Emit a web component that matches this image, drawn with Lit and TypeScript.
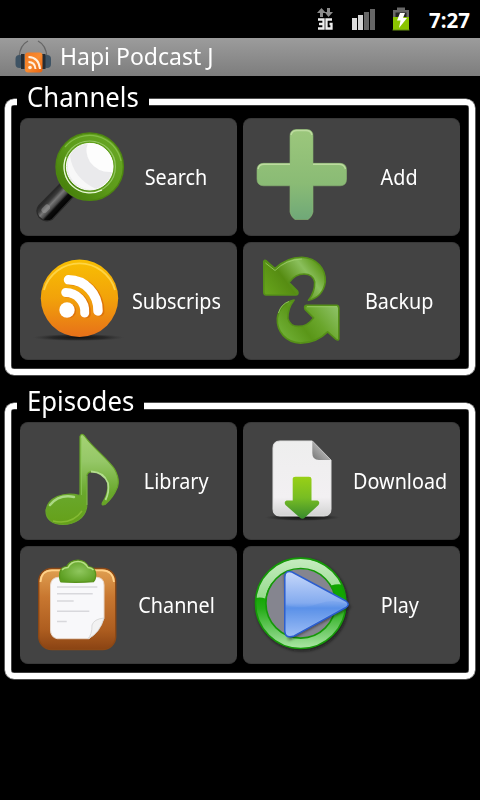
import { LitElement, html, css, svg } from "lit";
import { customElement, property } from "lit/decorators.js";

const icons: Record<string, unknown> = {
  search: svg`
    <defs>
      <linearGradient id="sg" x1="0" y1="1" x2="1" y2="0"><stop offset="0" stop-color="#3f7606"/><stop offset=".5" stop-color="#5d9c1a"/><stop offset="1" stop-color="#6aa826"/></linearGradient>
      <linearGradient id="sh" gradientUnits="userSpaceOnUse" x1="16" y1="66" x2="32" y2="81"><stop offset="0" stop-color="#151515"/><stop offset=".3" stop-color="#3c3c3c"/><stop offset=".45" stop-color="#777"/><stop offset=".62" stop-color="#4a4a4a"/><stop offset=".72" stop-color="#0c0c0c"/><stop offset="1" stop-color="#000"/></linearGradient>
    </defs>
    <path d="M30 55 L8.5 77 Q5 82 9 88 Q15 94 22 90.5 L43 68 Z" fill="url(#sh)" stroke="#2a2a2a" stroke-width="1.2"/>
    <path d="M17 78.500 L14.500 81" stroke="#a0a0a0" stroke-width="6" stroke-linecap="round" opacity=".5"/>
    <circle cx="59.7" cy="37.7" r="33.7" fill="url(#sg)" stroke="#4d8610" stroke-width="1.4"/>
    <path d="M35 18 A32 32 0 0 1 91 32" fill="none" stroke="#8bc34f" stroke-width="1.2" opacity=".8"/>
    <circle cx="59.7" cy="37.7" r="25.7" fill="none" stroke="#94c763" stroke-width="1.2"/>
    <path d="M36 28 A26 26 0 0 0 72 61" fill="none" stroke="#e8f8d7" stroke-width="1.2"/>
    <circle cx="59.7" cy="37.7" r="23.3" fill="#eaeaec" stroke="#fff"/>
    <path d="M58 14 A23.5 23.5 0 0 1 82.5 43 Q68 44 60 33 Q54 23 58 14Z" fill="#fdfdfd"/>
    <path d="M40 27 Q43 49 66 60 A23.5 23.5 0 0 1 40 27Z" fill="#f8f8f8"/>`,
  add: svg`
    <defs><linearGradient id="ag" gradientUnits="userSpaceOnUse" x1="0" y1="0" x2="0" y2="91"><stop offset="0" stop-color="#9cc77c"/><stop offset=".6" stop-color="#8abb75"/><stop offset="1" stop-color="#6fa878"/></linearGradient></defs>
    <path d="M43 .5H54Q60 .8 60 7V34.3H87Q93.5 34.5 93.5 41V50Q93.5 56.8 87 56.8H60V83Q59 88 55 90.5H42Q38 88 37 83V56.8H10.500Q4 56.5 4 50V41Q4 34.500 10.500 34.300H37V7Q37 1 43 .5Z" fill="url(#ag)" stroke="#8ab571" stroke-opacity=".6"/>
    <path d="M38 6Q39 1.500 44 1.500H53Q58 1.500 59 6M5 40Q6 35.300 11 35.300H37M60 35.300H86Q91 35.300 92.500 40" fill="none" stroke="#bddb9f" stroke-width="1.4"/>`,
  rss: svg`
    <defs>
      <linearGradient id="rg" x1="0" y1="0" x2="0" y2="1"><stop offset="0" stop-color="#f8bf02"/><stop offset=".5" stop-color="#f2a20a"/><stop offset="1" stop-color="#e77019"/></linearGradient>
      <radialGradient id="rs"><stop offset="0" stop-color="#111"/><stop offset=".6" stop-color="#222" stop-opacity=".8"/><stop offset="1" stop-color="#333" stop-opacity="0"/></radialGradient>
    </defs>
    <ellipse cx="48.500" cy="84.500" rx="46" ry="3.600" fill="url(#rs)"/>
    <circle cx="49.500" cy="45.300" r="38.700" fill="url(#rg)"/>
    <path d="M14 37A37 37 0 0 1 85 37" fill="none" stroke="#ffdb55" stroke-width="1.800" opacity=".8"/>
    <g fill="none" stroke="#d96b08" stroke-linecap="round" opacity=".75" transform="translate(1.700 .8)"><path d="M35.700 39.500A19 19 0 0 1 54.700 60" stroke-width="9"/><path d="M38.500 26.800A29.500 30.500 0 0 1 68 58" stroke-width="9.500"/><circle cx="37" cy="57" r="3.500" stroke-width="8"/></g>
    <g fill="none" stroke="#fff" stroke-linecap="round"><path d="M35.700 39.500A19 19 0 0 1 54.700 60" stroke-width="9"/><path d="M38.500 26.800A29.500 30.500 0 0 1 68 58" stroke-width="9.500"/></g>
    <circle cx="37" cy="57" r="7.700" fill="#fff"/>`,
  backup: svg`
    <defs>
      <linearGradient id="bg1" gradientUnits="userSpaceOnUse" x1="15" y1="42" x2="62" y2="6"><stop offset="0" stop-color="#67a41c"/><stop offset=".38" stop-color="#568c12"/><stop offset=".75" stop-color="#8abf5c"/><stop offset="1" stop-color="#5d9819"/></linearGradient>
      <linearGradient id="bg2" gradientUnits="userSpaceOnUse" x1="15" y1="42" x2="62" y2="6"><stop offset="0" stop-color="#8cc064"/><stop offset=".38" stop-color="#6aa62c"/><stop offset=".65" stop-color="#5a9618"/><stop offset="1" stop-color="#6fae34"/></linearGradient>
    </defs>
    <g stroke="#559018" stroke-width="1.600" stroke-linejoin="round">
      <path d="M10.800 8.500Q11.500 6.500 13.500 8L22 15.500Q33 4.500 49 4.300C64 5 73 16 72.300 29Q70 44 55.500 47.300Q62 39 61.700 29Q60 21 51 21Q42 21 36 29.500L44.500 38Q46 41.500 43 42H13Q10.800 42 10.800 39Z" fill="url(#bg1)"/>
      <path transform="rotate(180 48.300 47.200)" d="M10.800 8.500Q11.500 6.500 13.500 8L22 15.500Q33 4.500 49 4.300C64 5 73 16 72.300 29Q70 44 55.500 47.300Q62 39 61.700 29Q60 21 51 21Q42 21 36 29.500L44.500 38Q46 41.500 43 42H13Q10.800 42 10.800 39Z" fill="url(#bg2)"/>
    </g>
    <path d="M12.500 10L22 17.500Q33 6.500 49 6M25.500 60Q28 51 36 48.500M54 53.700H84" fill="none" stroke="#a5d573" opacity=".7"/>`,
  library: svg`
    <defs>
      <linearGradient id="lg" x1="0" y1="0" x2="0" y2="1"><stop offset="0" stop-color="#a5d375"/><stop offset=".3" stop-color="#95c767"/><stop offset=".65" stop-color="#69a82c"/><stop offset="1" stop-color="#65a019"/></linearGradient>
    </defs>
    <path d="M50 3.500Q51.500 -.5 54.500 3C62 14 78 26 84.500 36Q90 46 87.500 54Q83 65 75 71.500Q71 73 72.500 69.500Q79 59 78 50C74 38 62 38 58.500 39.500Q56.700 41 56.700 44V74C55 85 45 91.500 33 91.500C22 91.500 15.500 86 16 77C18 65 33 58 50 62.500Z" fill="url(#lg)" stroke="#68a42a" stroke-width="1.200"/>
    <path d="M20 72Q29 61 44 64" fill="none" stroke="#abd884" stroke-width="2.500" stroke-linecap="round"/>
    <path d="M61 38.500Q74 39 78 50Q79.500 59 75.500 67" fill="none" stroke="#b3dd8e" stroke-width="1.800"/>
    <path d="M23 88Q42 92 52 78" fill="none" stroke="#92c43c" stroke-width="1.500" opacity=".7"/>
    <path d="M51.500 5V62M57 43V72" stroke="#8fca5c" opacity=".7"/>`,
  download: svg`
    <defs>
      <linearGradient id="dg" x1="0" y1="0" x2="0" y2="1"><stop offset="0" stop-color="#eee"/><stop offset=".75" stop-color="#f2f0f2"/><stop offset="1" stop-color="#d2d2d2"/></linearGradient>
      <linearGradient id="df" x1="0" y1="1" x2="1" y2="0"><stop offset="0" stop-color="#747474"/><stop offset=".5" stop-color="#aaa"/><stop offset="1" stop-color="#777"/></linearGradient>
      <linearGradient id="da" x1="0" y1="0" x2="0" y2="1"><stop offset="0" stop-color="#98d016"/><stop offset=".5" stop-color="#78bd23"/><stop offset="1" stop-color="#388a2d"/></linearGradient>
      <radialGradient id="ds"><stop offset="0" stop-color="#111"/><stop offset=".65" stop-color="#222" stop-opacity=".8"/><stop offset="1" stop-color="#333" stop-opacity="0"/></radialGradient>
    </defs>
    <ellipse cx="49.500" cy="84.500" rx="38" ry="3.500" fill="url(#ds)"/>
    <path d="M27 8H59.300L78 27V76Q78 83 71 83H27Q20 83 20 76V15Q20 8 27 8Z" fill="url(#dg)" stroke="#e0e0e0"/>
    <path d="M59.300 8L78 27H66Q59.300 27 59.300 20Z" fill="url(#df)"/>
    <path d="M42.500 43.700H56Q58.500 43.700 58.500 46V67.500H64.500Q67.500 69 65.500 72L52 84.500Q49.500 87 46.700 84.500L32.500 72Q30.500 69 33.500 67.500H39.700V46Q39.700 43.700 42.500 43.700Z" fill="url(#da)"/>`,
  channel: svg`
    <defs>
      <linearGradient id="cg" x1="0" y1="0" x2="0" y2="1"><stop offset="0" stop-color="#e0a052"/><stop offset=".35" stop-color="#c87730"/><stop offset=".75" stop-color="#ae5e20"/><stop offset="1" stop-color="#8a4313"/></linearGradient>
      <radialGradient id="cc" cx=".55" cy=".5" r=".6"><stop offset="0" stop-color="#8fc75e"/><stop offset="1" stop-color="#5a9c1e"/></radialGradient>
    </defs>
    <rect x="8.700" y="11.500" width="77" height="81" rx="13" fill="url(#cg)" stroke="#8c4815" stroke-width="1.400"/>
    <path d="M10.500 25Q11 13.300 22 13.300H72Q83 13.300 84 25" fill="none" stroke="#ffd189" stroke-width="1.800"/>
    <path d="M28 20.300H67Q74 21 74 28V61Q69 75 59 81.700H27Q20.500 80 20.500 73V28Q21 21 28 20.300Z" fill="#f8f8fa" stroke="#e8d7c9" stroke-width="1"/>
    <path d="M74 61Q64 62 62 68Q62 78 58 81.700Q70 76 74 61Z" fill="#f2f2f2" stroke="#d3d3d3" stroke-width=".8"/>
    <path d="M27 30H67.300M27 36.700H62.700M27 44H43.700M27 54.200H59.300M27 64.500H36.700" stroke="#d8d8dc" stroke-width="1.600"/>
    <path d="M31 25Q29 22 29.700 16Q31 9.500 36.500 9.500Q40 3 48 3Q55 3 58.500 9.500Q65 10 65.700 17Q66 22 63.500 24.700Q48 26 31 25Z" fill="url(#cc)" stroke="#59921c" stroke-width="1.200"/>
    <path d="M32 13Q34 10.500 38 10.500Q41 4.500 48 4.500Q54.500 4.500 58 10.500Q62 11 63.500 13" fill="none" stroke="#b7df84" stroke-width="1.400"/>`,
  play: svg`
    <defs>
      <linearGradient id="pl" x1="0" y1="0" x2="0" y2="1"><stop offset="0" stop-color="#c6ecc0"/><stop offset="1" stop-color="#96db8d"/></linearGradient>
      <linearGradient id="pd" gradientUnits="userSpaceOnUse" x1="0" y1="38" x2="0" y2="92"><stop offset="0" stop-color="#11a500"/><stop offset=".25" stop-color="#26ad18"/><stop offset=".75" stop-color="#7fd278"/><stop offset="1" stop-color="#aee8a7"/></linearGradient>
      <linearGradient id="pt" x1="0" y1="0" x2="0" y2="1"><stop offset="0" stop-color="#c7d8fa"/><stop offset=".48" stop-color="#84abef"/><stop offset=".56" stop-color="#5f94e9"/><stop offset="1" stop-color="#b3ccfa"/></linearGradient>
      <filter id="pb" x="-.2" y="-.2" width="1.400" height="1.400"><feGaussianBlur stdDeviation="1.500"/></filter>
    </defs>
    <circle cx="49" cy="48" r="40.500" fill="none" stroke="#111" stroke-width="11" opacity=".65" filter="url(#pb)"/>
    <circle cx="47.700" cy="46.300" r="36" fill="#85858f"/>
    <circle cx="47.700" cy="46.300" r="40" fill="none" stroke="url(#pd)" stroke-width="10.500"/>
    <path d="M2.500 41A45.500 45.500 0 0 1 88.700 27.500Q84 26.500 78 28.500A36 36 0 0 0 12.200 41.500Q8 40 2.500 41Z" fill="url(#pl)"/>
    <circle cx="47.700" cy="46.300" r="45.200" fill="none" stroke="#159808" stroke-width="1.600"/>
    <circle cx="47.700" cy="46.300" r="34.800" fill="none" stroke="#159808" stroke-width="1.600"/>
    <path d="M33 18L95 50L37 81Z" fill="#111" stroke="#111" stroke-width="3" opacity=".6" filter="url(#pb)"/>
    <path d="M31.800 20Q32 13 39 15L93 44Q97.500 47.300 93 50.500L41 79Q32 82 31.800 74Z" fill="url(#pt)" stroke="#2b5dce" stroke-width="1.500"/>
    <path d="M32.500 48Q49 53 66 46.500Q80 42 95 47L41 78Q33 81 32.500 74Z" fill="#4b86e6" opacity=".2"/>`,
};

@customElement("menu-tile")
class MenuTile extends LitElement {
  @property() icon = "";
  @property() label = "";
  static styles = css`
    :host { display: block; }
    .tile { box-sizing: border-box; height: 118px; padding: 0 10px; display: flex; align-items: center; background: #434343; border: 1px solid #393939; border-width: 1px 0; border-radius: 8px; }
    .icon { width: 96px; height: 96px; flex: none; overflow: visible; }
    .label { flex: 1; display: flex; justify-content: center; color: #fff; font: 21.500px/30px "Noto Sans", sans-serif; white-space: nowrap; }
    .text { flex: none; transform: scaleX(.92); }
  `;
  render() {
    return html`<div class="tile">
      <svg class="icon" viewBox="0 0 96 96">${icons[this.icon]}</svg>
      <div class="label"><span class="text">${this.label}</span></div>
    </div>`;
  }
}

@customElement("tile-group")
class TileGroup extends LitElement {
  @property() heading = "";
  @property({ type: Array }) items: string[][] = [];
  static styles = css`
    :host { display: block; }
    .group { box-sizing: border-box; height: 276px; border: 6px solid #fff; border-radius: 9px; box-shadow: 0 0 0 .6px #999, inset 0 0 0 .6px #777; padding: 0 9px; }
    .heading { width: max-content; height: 30px; margin: -24px 0 7px -3px; padding: 0 10px; background: #000; color: #fff; font: 28px/30px "Noto Sans", sans-serif; white-space: nowrap; }
    .text { display: block; margin-right: -10px; transform: scaleX(.918); transform-origin: left; }
    .grid { display: grid; grid-template-columns: 217px 217px; gap: 6px; }
  `;
  render() {
    return html`<section class="group">
      <div class="heading"><span class="text">${this.heading}</span></div>
      <div class="grid">${this.items.map(([icon, label]) => html`<menu-tile icon=${icon} label=${label}></menu-tile>`)}</div>
    </section>`;
  }
}

@customElement("app-root")
class AppRoot extends LitElement {
  static styles = css`
    :host { display: block; width: 480px; height: 800px; background: #000; overflow: hidden; color: #fff; font-family: "Noto Sans", sans-serif; }
    .status { box-sizing: border-box; height: 38px; padding-right: 10px; display: flex; justify-content: flex-end; align-items: center; }
    .sicons { width: 100px; height: 38px; margin-right: 16px; }
    .time { font: bold 20.500px/38px "Noto Sans", sans-serif; padding-top: 1px; }
    .bar { box-sizing: border-box; height: 38px; padding-left: 13px; display: flex; align-items: center; background: linear-gradient(#9c9c9c, #7d7d7d); }
    .logo { width: 40px; height: 38px; margin-right: 7px; }
    .title { font-size: 24px; line-height: 36px; padding-bottom: 2px; white-space: nowrap; transform: scaleX(.958); transform-origin: left; }
    .main { padding: 23px 5px 0; display: flex; flex-direction: column; gap: 28px; }
  `;
  render() {
    return html`
      <div class="status">
        <svg class="sicons" viewBox="313 0 100 38">
          <g fill="#8b8b8b"><path d="M321.500 8l4.500 5h-3v4h-3v-4h-3zM328.500 17l-4-5h2.500v-4h3v4h3z"/></g>
          <path d="M318 19.500h5.500v9H318M319 24h4.500M332 19.500h-5.500v9h5V24h-2" fill="none" stroke="#eee" stroke-width="2.300"/>
          <path d="M352 18h5v12h-5z" fill="#ddd"/><path d="M358 15h5v15h-5z" fill="#d5d5d5"/><path d="M364 12h5v18h-5zM370 9h5v21h-5z" fill="#666"/>
          <path d="M393 10h4V7.500h8V10h4v20h-16z" fill="#686868"/><path d="M395.500 12.500h11V19h-11z" fill="#222"/>
          <path d="M393 17h16v13h-16z" fill="#8ac400"/><path d="M392.500 30h17" stroke="#668f10"/>
          <path d="M400 13h5l-2 5h4l-8 10 1.500-7.500H397z" fill="#fff"/>
        </svg>
        <span class="time">7:27</span>
      </div>
      <header class="bar">
        <svg class="logo" viewBox="13 38 40 38">
          <defs><linearGradient id="o" x1="0" y1="0" x2="1" y2="1"><stop offset="0" stop-color="#ef7720"/><stop offset=".5" stop-color="#f98b30"/><stop offset="1" stop-color="#e8620d"/></linearGradient></defs>
          <path d="M19 57Q20 45 28 41M47 57Q46 45 38 41" fill="none" stroke="#666" stroke-width="1.300"/>
          <rect x="15.500" y="55" width="8" height="13" rx="4" fill="#3e5364"/><rect x="43" y="55" width="8" height="13" rx="4" fill="#3e5364"/>
          <path d="M21 54h3.500v15H21zM42 54h3.500v15H42z" fill="#252c33"/>
          <rect x="25" y="52.500" width="17.500" height="20" rx="3" fill="url(#o)"/>
          <path d="M28.500 62Q35 62 35.500 69M28.500 57Q39 57.500 40 69" fill="none" stroke="#fff0df" stroke-width="2"/><circle cx="30" cy="67.500" r="1.800" fill="#fff0df"/>
        </svg>
        <span class="title">Hapi Podcast J</span>
      </header>
      <main class="main">
        <tile-group heading="Channels" .items=${[["search", "Search"], ["add", "Add"], ["rss", "Subscrips"], ["backup", "Backup"]]}></tile-group>
        <tile-group heading="Episodes" .items=${[["library", "Library"], ["download", "Download"], ["channel", "Channel"], ["play", "Play"]]}></tile-group>
      </main>`;
  }
}
